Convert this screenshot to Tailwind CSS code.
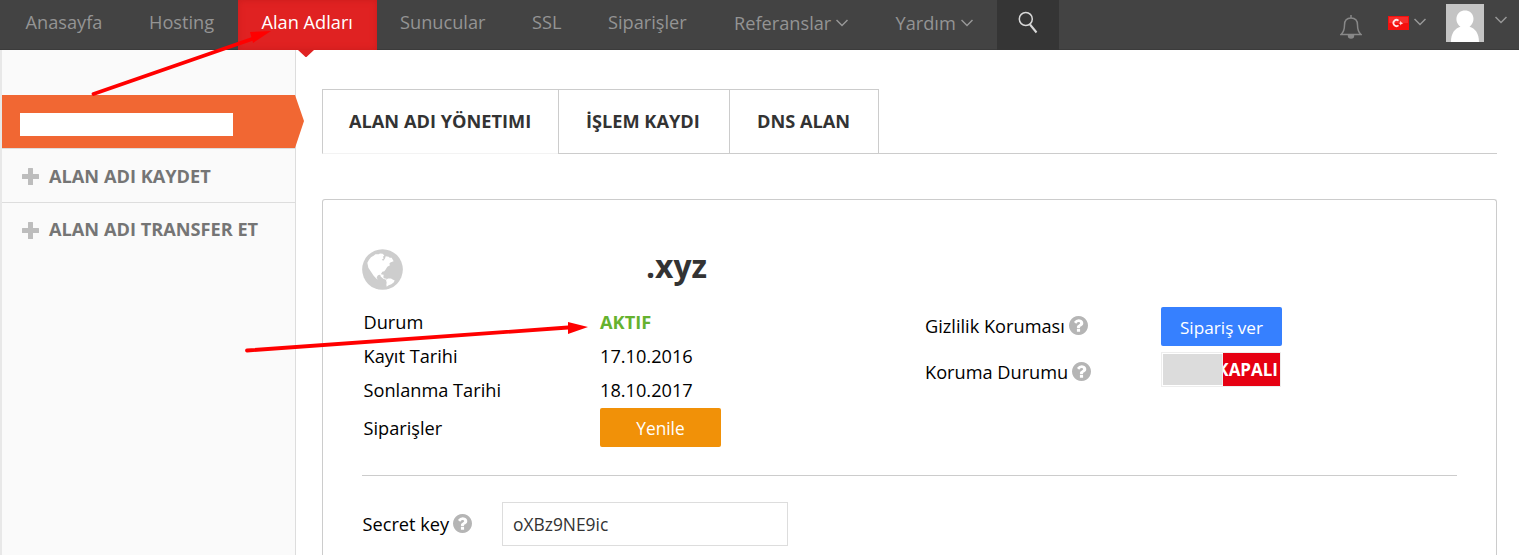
<!DOCTYPE html>
<html lang="tr">
<head>
<meta charset="utf-8">
<title>Alan Adları</title>
<script src="https://cdn.jsdelivr.net/npm/@tailwindcss/browser@4"></script>
</head>
<body class="relative h-[555px] w-[1519px] overflow-hidden bg-white font-['Open_Sans',sans-serif] text-[18.200px] leading-[34px] text-black">
<svg class="hidden">
  <symbol id="help" viewBox="128 128 1536 1536"><path fill="#b5b5b5" d="M1024 1376v-192q0-14-9-23t-23-9h-192q-14 0-23 9t-9 23v192q0 14 9 23t23 9h192q14 0 23-9t9-23zm256-672q0-88-55.500-163t-138.500-116-170-41q-243 0-371 213-15 24 8 42l132 100q7 6 19 6 16 0 25-12 53-68 86-92 34-24 86-24 48 0 85.500 26t37.500 59q0 38-20 61t-68 45q-63 28-115.500 86.500t-52.500 125.500v36q0 14 9 23t23 9h192q14 0 23-9t9-23q0-19 21.500-49.500t54.500-49.500q32-18 49-28.500t46-35 44.500-48 28-60.500 12.500-81zm384 192q0 209-103 385.500t-279.500 279.500-385.500 103-385.500-103-279.500-279.500-103-385.500 103-385.500 279.500-279.500 385.500-103 385.500 103 279.500 279.500 103 385.500z"/></symbol>
  <symbol id="chev" viewBox="0 0 12 8"><path fill="none" stroke="#979797" stroke-width="1.500" d="M.5 1 6 6.500 11.500 1"/></symbol>
  <symbol id="plus" viewBox="0 0 17 17"><path fill="#bdbdbd" d="M6.500 0h4a.5.5 0 0 1 .5.5V6h5.500a.5.5 0 0 1 .5.5v4a.5.5 0 0 1-.5.5H11v5.500a.5.5 0 0 1-.5.5h-4a.5.5 0 0 1-.5-.5V11H.5a.5.5 0 0 1-.5-.5v-4A.5.5 0 0 1 .5 6H6V.5a.5.5 0 0 1 .5-.5z"/></symbol>
</svg>

<header class="flex h-[50px] bg-[#434343] leading-[44px] whitespace-nowrap text-[#949494] shadow-[inset_0_-1px_0_#3b3b3b]">
  <a class="w-[126px] pl-[25.500px]">Anasayfa</a>
  <a class="w-[112px] pl-[23px]">Hosting</a>
  <a class="relative w-[139px] bg-[#e02222] pl-[23.500px] text-white shadow-[inset_0_0_6px_#c81c1c]">Alan Adları
    <svg class="absolute top-[50px] left-[60px] h-[7px] w-4" viewBox="0 0 16 7"><path fill="#e02222" d="M0 0h16L9 6.500q-1 1-2 0z"/></svg>
  </a>
  <a class="w-[132px] pl-[23px]">Sunucular</a>
  <a class="w-[76px] pl-[23px]">SSL</a>
  <a class="w-[126px] pl-[23px]">Siparişler</a>
  <a class="flex w-[161px] gap-[5px] pl-[23px] leading-[46px]">Referanslar<svg class="mt-[19px] h-2 w-3"><use href="#chev"/></svg></a>
  <a class="flex w-[125px] gap-[5px] pl-[23.500px] leading-[46px]">Yardım<svg class="mt-[19px] h-2 w-3"><use href="#chev"/></svg></a>
  <div class="w-[62px] bg-[#353535] pt-[11px] pl-[21px]"><svg class="h-[23px] w-[20px]" viewBox="0 0 20 23" fill="none" stroke="#d8d8d8"><circle cx="7.800" cy="8" r="6.500" stroke-width="1.500"/><path stroke-width="2" d="m12 13.500 6.500 8"/></svg></div>
  <div class="flex grow items-start pl-[281px]">
    <svg class="mt-[15px] h-6 w-[22px]" viewBox="0 0 22 24" fill="none" stroke="#888" stroke-width="1.500"><path d="M11 0v3M1 19.500C4 17 4.500 14 4.500 10c0-4.500 2.500-7 6.500-7s6.500 2.500 6.500 7c0 4 .5 7 3.500 9.500z"/><path fill="#888" d="M8.500 20.500c0 3.300 5 3.300 5 0z"/></svg>
    <svg class="mt-4 ml-[26px] h-[14px] w-[21px]" viewBox="0 0 21 14"><path fill="#f5100e" d="M0 0h21v14H0z"/><path fill="#fff" fill-opacity=".12" d="M1 1h19v6H1z"/><path fill="none" stroke="#ffe8e8" stroke-width="1.700" d="M10.500 4.600a3.100 3.100 0 1 0 0 4.800"/><path fill="#ffe8e8" d="m12.500 4.800 1 1.600 1.800.8-1.800.8-1 1.400-.3-1.600-1.700-.6 1.700-.8z"/></svg>
    <svg class="mt-[18px] ml-[5px] h-2 w-3"><use href="#chev"/></svg>
    <svg class="mt-1 ml-5 h-[38px] w-[38px]" viewBox="0 0 38 38"><path fill="#c4c4c4" d="M0 0h38v38H0z"/><path fill="#fff" d="M5 38c0-9 4-13.500 9.500-15.200C7.500 17.500 10 6.500 19 6.500s11.500 11 4.500 16.300C29 24.500 33 29 33 38z"/></svg>
    <svg class="mt-4 ml-[11px] h-2 w-3"><use href="#chev"/></svg>
  </div>
</header>

<div class="flex h-[505px]">
  <aside class="w-[296px] border-r border-l-2 border-r-[#ddd] border-l-[#e8e8e8] bg-[#fafafa] pt-[45px] font-bold whitespace-nowrap text-[#757575]">
    <div class="relative h-[53px] bg-[#f16733] pt-[18px] pl-[18px]">
      <div class="h-[23px] w-[213px] bg-white"></div>
      <svg class="absolute top-0 left-[293px] h-[53px] w-[9px]" viewBox="0 0 9 53"><path fill="#f16733" d="M0 0l9 26L0 53z"/></svg>
    </div>
    <a class="flex h-[55px] items-center gap-[10px] border-y border-[#ddd] pl-[20px]"><svg class="mt-px h-[17px] w-[17px]"><use href="#plus"/></svg><span class="mt-px">ALAN ADI KAYDET</span></a>
    <a class="flex h-[52px] items-center gap-[10px] pl-[20px]"><svg class="mt-[3px] h-[17px] w-[17px]"><use href="#plus"/></svg><span>ALAN ADI TRANSFER ET</span></a>
  </aside>

  <main class="w-[1201px] pt-[39px] pl-[26px]">
    <nav class="flex h-[65px] leading-[62px] font-bold whitespace-nowrap text-[#333]">
      <a class="w-[236px] border-t border-l border-b border-[#ccc] border-b-[#f3f3f3] pl-[26px]">ALAN ADI YÖNETIMI</a>
      <a class="w-[171px] border border-r-0 border-[#ccc] pl-[27px]">İŞLEM KAYDI</a>
      <a class="w-[150px] border border-[#ccc] pl-[27px]">DNS ALAN</a>
      <div class="grow border-b border-[#ccc]"></div>
    </nav>
    <section class="mt-[45px] h-[356px] rounded-t-[3px] border border-b-0 border-[#ccc] px-[39px] pt-[47px]">
      <div class="flex h-[59px]">
        <svg class="mt-[2px] h-[41px] w-[41px]" viewBox="36 177 123 122"><circle cx="97.500" cy="238" r="61" fill="#cdcdcd"/><path fill="#fff" d="m57 209 6-8 9-5 4-4 10 0 4-2 8 1 5 5-4 4 2 5-6 4 5 3 5-7 2-7 9 2 3 3 6 0 6 10-10 4-3 4 2 4-8 5-5 8-4 5-6 2-5 8-8 2-4 6 3 8-5-5-7-7-8-12-8-12-3-15zM90 249l5 4 6 1-1 8 5 4 4-2-1 5-8-3-8-7zM108 269l6-4 9 0 5 3 6 3-3 6-7 5-8 3-6 5-1-7 1-5z"/></svg>
        <div class="pl-[243px] text-[31.800px] leading-[38px] font-bold text-[#333]">.xyz</div>
      </div>
      <div class="flex h-[170px] border-b border-[#ccc]">
        <dl class="grid w-[563px] grid-cols-[238px_1fr] grid-rows-[34px_34px_34px_41px] content-start leading-[32px]">
          <dt class="pl-[1.500px]">Durum</dt><dd class="font-bold text-[#65b22e]">AKTIF</dd>
          <dt class="pl-[1.500px]">Kayıt Tarihi</dt><dd>17.10.2016</dd>
          <dt class="pl-[1.500px]">Sonlanma Tarihi</dt><dd>18.10.2017</dd>
          <dt class="pt-[4px] pl-[1.500px]">Siparişler</dt><dd><a class="block h-[39px] w-[121px] rounded-[2px] bg-[#f19108] text-center text-[17.300px] leading-[41px] text-white">Yenile</a></dd>
        </dl>
        <div class="flex flex-col gap-[7px] pt-px">
          <div class="flex h-[39px] leading-[38px]"><div class="flex w-[236px] gap-[4px]">Gizlilik Koruması<svg class="mt-[9px] h-[19px] w-[19px]"><use href="#help"/></svg></div><a class="h-[39px] w-[121px] rounded-[2px] bg-[#3680ff] text-center text-[17.200px] leading-[41px] text-white">Sipariş ver</a></div>
          <div class="-mt-px flex h-[35px] leading-[40px]"><div class="flex w-[236px] gap-[4px]">Koruma Durumu<svg class="mt-[10px] h-[19px] w-[19px]"><use href="#help"/></svg></div>
            <div class="flex h-[35px] w-[120px] border border-[#ededed]"><div class="my-px ml-px w-[60px] border-r border-[#eee] bg-[#dcdcdc]"></div><div class="flex w-[57px] justify-end overflow-hidden bg-[#e60012] pr-[2px] text-[17px] leading-[34px] font-bold text-white"><span>KAPALI</span></div></div>
          </div>
        </div>
      </div>
      <div class="flex pt-[26px]">
        <div class="flex w-[140px] gap-[4px] pl-[.5px] leading-[44px]">Secret key<svg class="mt-[12px] h-[19px] w-[19px]"><use href="#help"/></svg></div>
        <div class="h-[44px] w-[286px] border border-[#ddd] pl-[10px] text-[17.400px] leading-[43px] text-[#333]">oXBz9NE9ic</div>
      </div>
    </section>
  </main>
</div>

<svg class="absolute inset-0 h-[555px] w-[1519px]" viewBox="0 0 1519 555" fill="#f00" stroke="#f00" stroke-linecap="round"><path stroke-width="3.800" d="M93.500 94 252 39M247 350.500 568 327.500"/><path stroke="none" d="m250 32 21-1-18 12zM568 322l20 5-20 7z"/></svg>
</body>
</html>
